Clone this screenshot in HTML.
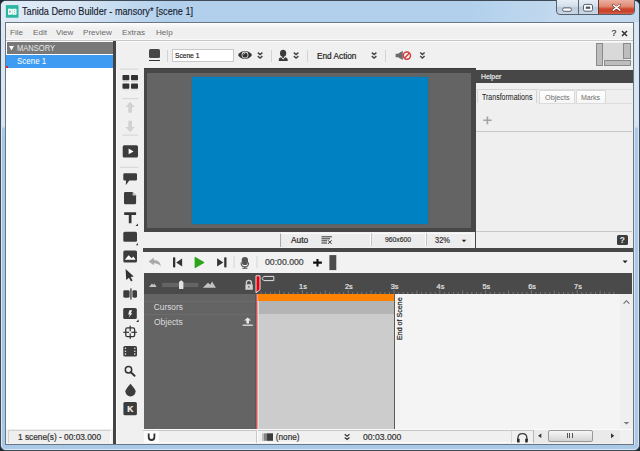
<!DOCTYPE html>
<html><head><meta charset="utf-8">
<style>
*{margin:0;padding:0;box-sizing:border-box}
html,body{width:640px;height:451px;overflow:hidden;background:#1e2630}
body{position:relative;font-family:"Liberation Sans",sans-serif;}
.a{position:absolute}
.t{position:absolute;line-height:1;white-space:nowrap;-webkit-text-stroke:0.2px currentColor}
</style></head><body>
<!-- window frame -->
<div class="a" style="left:0;top:0;width:640px;height:451px;background:linear-gradient(#dce8f4 0,#d8e5f3 125px,#a9c9e6 128px);border:1px solid #3e4a56;border-radius:6px"></div>
<div class="a" style="left:1px;top:1px;width:638px;height:449px;border:1px solid #d7e6f4;border-radius:5px"></div>
<!-- title bar -->
<div class="a" style="left:1px;top:1px;width:638px;height:21px;border-radius:5px 5px 0 0;background:linear-gradient(90deg,#e0ebf6 0,#d9e6f3 70px,#b2d0ec 165px,#b2d0ec 470px,#c2d9ee 555px)"></div>
<svg class="a" style="left:5px;top:4px" width="15" height="15" viewBox="5 4 15 15">
 <rect x="5.9" y="5.1" width="12.6" height="12.6" fill="#29b6a2"/>
 <path d="M8 8.7H11.2Q12.3 8.7 12.3 9.8V13.6Q12.3 14.7 11.2 14.7H8Z" fill="#f4fffc"/>
 <path d="M12.3 8.7H15.8Q16.6 8.7 16.6 9.6V11.2L16.1 11.7L16.6 12.2V13.8Q16.6 14.7 15.8 14.7H12.3Z" fill="#f4fffc"/>
 <rect x="9.4" y="10.5" width="1.1" height="2.2" fill="#5a8f86"/>
 <rect x="14.2" y="9.9" width="0.9" height="0.9" fill="#5a8f86"/>
 <rect x="14.2" y="12.4" width="0.9" height="0.9" fill="#5a8f86"/>
</svg>
<div class="t" style="left:22.3px;top:5.6px;font-size:10.6px;color:#16202e;transform:scaleX(0.862);transform-origin:0 0;-webkit-text-stroke:0.15px #16202e">Tanida Demo Builder - mansory* [scene 1]</div>
<!-- caption buttons -->
<div class="a" style="left:556px;top:-1px;width:79px;height:15.5px;border:1px solid #56606c;border-radius:0 0 4px 4px;background:linear-gradient(#e6eef6,#d3dfeb 45%,#bccbdb 55%,#c9d7e5);overflow:hidden">
  <div class="a" style="left:20.5px;top:0;width:1px;height:16px;background:#5d6874"></div>
  <div class="a" style="left:41px;top:0;width:37px;height:16px;border-left:1px solid #5d3a34;background:linear-gradient(#eab0a2,#e08a74 40%,#cf4a30 55%,#c8402a 70%,#dc7a62)"></div>
</div>
<svg class="a" style="left:556px;top:0" width="80" height="16" viewBox="556 0 80 16">
 <rect x="562.6" y="7.9" width="8.8" height="3.4" rx="1.5" fill="#fdfdfd" stroke="#4a5460" stroke-width="0.9"/>
 <rect x="583.5" y="4.4" width="9" height="6.8" rx="1.6" fill="#fdfdfd" stroke="#4a5460" stroke-width="0.9"/>
 <rect x="585.8" y="6.6" width="4.4" height="2.2" fill="#4a5460"/>
 <path d="M613.3 5.2L619.8 10.2M619.8 5.2L613.3 10.2" stroke="#5a2a22" stroke-width="2.6" stroke-linecap="round"/>
 <path d="M613.3 5.2L619.8 10.2M619.8 5.2L613.3 10.2" stroke="#fff" stroke-width="1.5" stroke-linecap="round"/>
</svg>
<!-- client border -->
<div class="a" style="left:5px;top:22px;width:629px;height:423px;background:#f0f0f0;border:1px solid #6a7684"></div>
<div class="a" style="left:634px;top:22px;width:1px;height:423px;background:#d4e4f3"></div>
<!-- menu bar -->
<div class="a" style="left:6px;top:23px;width:627px;height:18px;background:linear-gradient(#fdfdfd,#f0f0f0 30%)"></div>
<div class="t" style="left:10px;top:29px;font-size:8.1px;color:#6a6a6a;-webkit-text-stroke:0">File</div>
<div class="t" style="left:33px;top:29px;font-size:8.1px;color:#6a6a6a;-webkit-text-stroke:0">Edit</div>
<div class="t" style="left:56px;top:29px;font-size:8.1px;color:#6a6a6a;-webkit-text-stroke:0">View</div>
<div class="t" style="left:83px;top:29px;font-size:8.1px;color:#6a6a6a;-webkit-text-stroke:0">Preview</div>
<div class="t" style="left:122px;top:29px;font-size:8.1px;color:#6a6a6a;-webkit-text-stroke:0">Extras</div>
<div class="t" style="left:156px;top:29px;font-size:8.1px;color:#6a6a6a;-webkit-text-stroke:0">Help</div>
<div class="a" style="left:6px;top:39px;width:627px;height:1px;background:#fafafa"></div>
<div class="a" style="left:6px;top:40px;width:627px;height:1.2px;background:#c6c6c6"></div>


<!-- left scene panel -->
<div class="a" style="left:6px;top:41px;width:107px;height:402px;background:#fff"></div>
<div class="a" style="left:7px;top:42px;width:105.5px;height:12px;background:#787878"></div>
<svg class="a" style="left:9px;top:46px" width="6" height="5"><path d="M0 0H5L2.5 4.5Z" fill="#fff"/></svg>
<div class="t" style="left:17px;top:44.2px;font-size:8.4px;color:#eaeaea;-webkit-text-stroke:0;transform:scaleX(0.9);transform-origin:0 0">MANSORY</div>
<div class="a" style="left:6px;top:55px;width:106.5px;height:12.5px;background:#3d9cf2"></div>
<div class="t" style="left:17.2px;top:57px;font-size:8.4px;color:#fff;-webkit-text-stroke:0;transform:scaleX(0.95);transform-origin:0 0">Scene 1</div>
<div class="a" style="left:6px;top:66px;width:2px;height:2px;background:#d03030"></div>
<!-- left status -->
<div class="a" style="left:6px;top:429px;width:107px;height:14px;background:#f0f0f0"></div>
<div class="a" style="left:8px;top:430px;width:103px;height:13px;background:#efefef;border-top:1px solid #d0d0d0;border-left:1px solid #d0d0d0;border-right:1px solid #fff"></div>
<div class="t" style="left:18px;top:433px;font-size:8.3px;color:#333">1 scene(s) - 00:03.000</div>
<!-- dark divider -->
<div class="a" style="left:113.4px;top:41px;width:2.8px;height:402.5px;background:#444"></div>
<!-- left toolbar -->
<div class="a" style="left:116px;top:41px;width:27px;height:402px;background:#f0f0f0;border-left:1px solid #fafafa"></div>
<!-- top toolbar -->
<div class="a" style="left:116px;top:41.2px;width:517px;height:26.8px;background:#f0f0f0;border-top:1px solid #fbfbfb"></div>
<!-- canvas -->
<div class="a" style="left:143.5px;top:68.4px;width:332.5px;height:163.6px;background:#474747;border-top:1px solid #3a3a3a"></div>
<div class="a" style="left:147.3px;top:72.7px;width:323.9px;height:155.1px;background:#646464"></div>
<div class="a" style="left:192px;top:76.8px;width:236.3px;height:147.4px;background:#0081c2;box-shadow:0 0 1px #0a6da5"></div>
<!-- canvas status -->
<div class="a" style="left:143px;top:232px;width:333px;height:15.5px;background:#f0f0f0"></div>
<!-- helper -->
<div class="a" style="left:475px;top:68px;width:158px;height:180px;background:#efefef;border-left:1px solid #484848"></div>
<div class="a" style="left:476px;top:70px;width:157px;height:12.5px;background:#474747"></div>
<div class="t" style="left:481px;top:73.3px;font-size:8.1px;color:#f0f0f0;transform:scaleX(0.85);transform-origin:0 0">Helper</div>
<!-- dark separator -->
<div class="a" style="left:143px;top:247.5px;width:490px;height:4.5px;background:#474747"></div>
<!-- timeline toolbar -->
<div class="a" style="left:143px;top:252px;width:490px;height:21px;background:#f2f2f2"></div>
<!-- timeline header -->
<div class="a" style="left:144px;top:273px;width:488px;height:21px;background:#4a4a4a"></div>
<!-- timeline left panel -->
<div class="a" style="left:144px;top:294px;width:112px;height:135px;background:#646464"></div>
<div class="a" style="left:144px;top:301px;width:112px;height:1px;background:#6c6c6c"></div>
<div class="a" style="left:144px;top:314px;width:112px;height:1px;background:#6c6c6c"></div>
<div class="t" style="left:153.8px;top:303.4px;font-size:8.3px;transform:scaleX(1.0);transform-origin:0 0;-webkit-text-stroke:0;color:#dcdcdc">Cursors</div>
<div class="t" style="left:154px;top:318.4px;font-size:8.3px;transform:scaleX(1.02);transform-origin:0 0;-webkit-text-stroke:0;color:#dcdcdc">Objects</div>
<!-- timeline content -->
<div class="a" style="left:256px;top:294px;width:364px;height:135px;background:#f4f4f4"></div>
<div class="a" style="left:257px;top:294px;width:137px;height:7px;background:#ff8200"></div>
<div class="a" style="left:257px;top:301px;width:137px;height:13px;background:#b4b4b4"></div>
<div class="a" style="left:257px;top:314px;width:137px;height:115px;background:#cccccc"></div>
<div class="a" style="left:394px;top:294px;width:1px;height:135px;background:#5c5c5c"></div>
<div class="a" style="left:255px;top:294px;width:1px;height:135px;background:#595959"></div>
<div class="a" style="left:256px;top:294px;width:1px;height:135px;background:#c85c5c"></div>
<div class="a" style="left:257px;top:294px;width:1px;height:135px;background:#ec9c9c"></div>
<div class="a" style="left:258px;top:301px;width:1px;height:128px;background:#dedede"></div>
<!-- v scrollbar -->
<div class="a" style="left:620px;top:294px;width:12.5px;height:135px;background:#efefef"></div>
<!-- bottom status -->
<div class="a" style="left:143px;top:429px;width:490px;height:14px;background:#f0f0f0"></div>

<!-- top toolbar icons -->
<div class="a" style="left:148.75px;top:49px;width:11.25px;height:8.75px;background:#474747;border-radius:1.5px"></div>
<div class="a" style="left:148.75px;top:60px;width:11.25px;height:1px;background:#333"></div>
<div class="a" style="left:167px;top:49.5px;width:1px;height:12px;background:#d2d2d2"></div>
<div class="a" style="left:172.25px;top:49.25px;width:61.5px;height:12.25px;background:#fff;border:1px solid #c8c8c8"></div>
<div class="t" style="left:175px;top:52px;font-size:7.8px;color:#222;transform:scaleX(0.85);transform-origin:0 0">Scene 1</div>
<svg class="a" style="left:236px;top:49px" width="30" height="12" viewBox="236 49 30 12">
 <path d="M238 55C241 49.7 249 49.7 252 55C249 60.3 241 60.3 238 55Z" fill="#333"/>
 <circle cx="245" cy="55" r="3.4" fill="#f0f0f0"/>
 <circle cx="245" cy="55" r="2.6" fill="#333"/>
 <path d="M243.6 54.6A1.5 1.5 0 0 1 245.2 53.2" stroke="#f0f0f0" stroke-width="0.7" fill="none"/>
 <path d="M257.8 52.6L260.1 54.6L262.4 52.6M257.8 56.1L260.1 58.1L262.4 56.1" fill="none" stroke="#444" stroke-width="1.4"/>
</svg>
<div class="a" style="left:271px;top:49.5px;width:1px;height:12px;background:#d2d2d2"></div>
<svg class="a" style="left:276px;top:48px" width="26" height="14" viewBox="276 48 26 14">
 <ellipse cx="283.1" cy="53.2" rx="3.1" ry="3.5" fill="#3a3a3a"/>
 <rect x="282.3" y="55.5" width="1.6" height="2.5" fill="#3a3a3a"/>
 <path d="M278.8 61V59.2Q279 57.6 281 57.2L283.1 59.6L285.2 57.2Q287.4 57.6 287.7 59.2V61Z" fill="#3a3a3a"/>
 <path d="M293.8 52.6L296.1 54.6L298.4 52.6M293.8 56.1L296.1 58.1L298.4 56.1" fill="none" stroke="#444" stroke-width="1.4"/>
</svg>
<div class="a" style="left:306.5px;top:49.5px;width:1px;height:12px;background:#d2d2d2"></div>
<div class="t" style="left:317px;top:51.5px;font-size:8.6px;color:#222;transform:scaleX(0.96);transform-origin:0 0">End Action</div>
<svg class="a" style="left:368px;top:50px" width="12" height="11" viewBox="368 50 12 11">
 <path d="M371.8 52.6L374.1 54.6L376.4 52.6M371.8 56.1L374.1 58.1L376.4 56.1" fill="none" stroke="#444" stroke-width="1.4"/>
</svg>
<div class="a" style="left:385px;top:49.5px;width:1px;height:12px;background:#d2d2d2"></div>
<svg class="a" style="left:394px;top:49px" width="34" height="13" viewBox="394 49 34 13">
 <path d="M395.6 53.8H398L402.8 50.7V60L398 57.3H395.6Z" fill="#6b6b6b"/>
 <circle cx="406.9" cy="55.6" r="3.6" fill="#f4f4f4" stroke="#d43c3c" stroke-width="1.5"/>
 <path d="M409.3 53.2L404.5 58" stroke="#d43c3c" stroke-width="1.5"/>
 <path d="M420.2 52.6L422.4 54.6L424.6 52.6M420.2 56.1L422.4 58.1L424.6 56.1" fill="none" stroke="#444" stroke-width="1.4"/>
</svg>
<!-- layout icon -->
<div class="a" style="left:595.5px;top:43px;width:35.5px;height:23.5px;background:#f0f0f0"></div>
<div class="a" style="left:603px;top:43px;width:20.5px;height:17px;background:#d9d9d9"></div>
<div class="a" style="left:595.5px;top:43px;width:7.2px;height:23.3px;background:#bdbdbd;border:1px solid #8a8a8a"></div>
<div class="a" style="left:623.2px;top:43px;width:7.6px;height:15.6px;background:#bdbdbd;border:1px solid #8a8a8a"></div>
<div class="a" style="left:603.8px;top:60.2px;width:27px;height:6.1px;background:#bdbdbd;border:1px solid #8a8a8a"></div>
<!-- menu right -->
<div class="t" style="left:611.4px;top:28.8px;font-size:8.6px;color:#333;-webkit-text-stroke:0.2px #333">?</div>
<svg class="a" style="left:621px;top:29.5px" width="7" height="7"><path d="M1 1L6 6M6 1L1 6" stroke="#333" stroke-width="1.5"/></svg>

<!-- left toolbar icons -->
<svg class="a" style="left:116px;top:41px" width="27" height="402" viewBox="116 41 27 402">
 <g fill="#333">
  <rect x="120" y="68.6" width="18.5" height="1" fill="#d4d4d4"/>
  <rect x="122.5" y="75" width="6.8" height="5.2" rx="0.8"/>
  <rect x="131" y="75" width="7" height="5.2" rx="0.8"/>
  <rect x="122.5" y="83.5" width="6.8" height="5.2" rx="0.8"/>
  <rect x="131" y="83.5" width="7" height="5.2" rx="0.8"/>
  <rect x="122.5" y="81" width="6.8" height="0.8" fill="#d8d8d8"/>
  <rect x="131" y="81" width="7" height="0.8" fill="#d8d8d8"/>
  <rect x="122.5" y="89.5" width="6.8" height="0.8" fill="#d8d8d8"/>
  <rect x="131" y="89.5" width="7" height="0.8" fill="#d8d8d8"/>
  <rect x="122.4" y="98.2" width="15.6" height="1" fill="#d4d4d4"/>
  <path d="M130.1 101.7L134.8 107H132V112.7H128.3V107H125.5Z" fill="#d2d2d2"/>
  <path d="M130.1 132.3L134.8 127H132V120.8H128.3V127H125.5Z" fill="#d2d2d2"/>
  <rect x="122.4" y="134.6" width="15.6" height="1" fill="#d4d4d4"/>
  <rect x="122.7" y="145.3" width="15.3" height="12.2" rx="1.5" fill="#3c3c3c"/>
  <path d="M128.6 148.6L133.6 151.4L128.6 154.2Z" fill="#fff"/>
  <rect x="120" y="166.8" width="18.5" height="1" fill="#d4d4d4"/>
  <path d="M124.5 173.3H135.8Q137 173.3 137 174.5V179.2Q137 180.4 135.8 180.4H129.3L125.8 185.2L126 180.4H124.5Q123.3 180.4 123.3 179.2V174.5Q123.3 173.3 124.5 173.3Z" fill="#3c3c3c"/>
  <path d="M125.2 191.9H132.6L136.1 195.4V203Q136.1 204.3 134.8 204.3H125.2Q124 204.3 124 203V193.1Q124 191.9 125.2 191.9Z" fill="#3c3c3c"/>
  <path d="M132.6 191.9V195.4H136.1Z" fill="#c8c8c8"/>
  <path d="M124.2 212.2H136.1V214.9H131.5V223.2H128.8V214.9H124.2Z" fill="#333"/>
  <path d="M138 223.5V226H135.5Z" fill="#333"/>
  <rect x="123.3" y="231.7" width="13.7" height="10.1" rx="1.5" fill="#3c3c3c"/>
  <path d="M138 243V245.3H135.7Z" fill="#333"/>
  <rect x="123.3" y="250.4" width="13.7" height="12" rx="1.5" fill="#3c3c3c"/>
  <path d="M124.8 259.8L128.6 255.2L131.6 258.2L133.4 256.4L135.6 259.8Z" fill="#fff"/>
  <path d="M125.6 269L133.8 276.6L130.6 277L132.6 280.6L131 281.5L129 277.8L126.2 280Z" fill="#333"/>
  <rect x="123.3" y="290.2" width="6.3" height="7.5" rx="1.4" fill="#3c3c3c"/>
  <rect x="132.4" y="290.2" width="4.6" height="7.5" rx="1.4" fill="#3c3c3c"/>
  <rect x="130.4" y="288.4" width="1.1" height="11.1" fill="#1a1a1a"/>
  <rect x="123.2" y="308" width="13.6" height="11" rx="1.5" fill="#3c3c3c"/>
  <path d="M129.4 310.3H132.2L130.7 313.3H132.4L128.5 317.7L129.9 314.6H128.2Z" fill="#f4f4f4"/>
  <path d="M138.6 319.6V321.9H136.1Z" fill="#222"/>
  <rect x="125.75" y="327.95" width="8.9" height="8.7" rx="1.6" fill="none" stroke="#333" stroke-width="1.3"/>
  <rect x="129.6" y="325.6" width="1.2" height="5.6"/><rect x="129.6" y="333.4" width="1.2" height="5.5"/>
  <rect x="123.3" y="331.7" width="5.8" height="1.2"/><rect x="131.3" y="331.7" width="5.6" height="1.2"/>
  <rect x="123.3" y="345.9" width="13.7" height="10.6" rx="1.5" fill="#3c3c3c"/>
  <g fill="#e8e8e8"><circle cx="125.5" cy="348.3" r="0.8"/><circle cx="125.5" cy="351.2" r="0.8"/><circle cx="125.5" cy="354.1" r="0.8"/><circle cx="134.8" cy="348.3" r="0.8"/><circle cx="134.8" cy="351.2" r="0.8"/><circle cx="134.8" cy="354.1" r="0.8"/></g>
  <circle cx="128.5" cy="369.7" r="3.2" fill="none" stroke="#333" stroke-width="1.5"/>
  <path d="M130.8 372.2L134.6 375.8" stroke="#333" stroke-width="1.9" stroke-linecap="round"/>
  <path d="M130.4 383.8Q135.6 389.5 135.6 391.3A5.1 5.1 0 0 1 125.4 391.3Q125.4 389.5 130.4 383.8Z" fill="#3c3c3c"/>
  <rect x="123.4" y="402.1" width="13.5" height="13.1" rx="1.5" fill="#3c3c3c"/>
 </g>
</svg>
<div class="t" style="left:127.2px;top:405px;font-size:8.5px;font-weight:bold;color:#f2f2f2">K</div>

<!-- canvas status boxes -->
<div class="a" style="left:280px;top:232.5px;width:191px;height:14px;background:#ececec;border-left:1px solid #a8a8a8;border-top:1px solid #fafafa"></div>
<div class="a" style="left:369.5px;top:233px;width:1px;height:13px;background:#fdfdfd"></div>
<div class="a" style="left:370.5px;top:233px;width:1px;height:13px;background:#c4c4c4"></div>
<div class="a" style="left:425px;top:233px;width:1px;height:13px;background:#fdfdfd"></div>
<div class="a" style="left:426px;top:233px;width:1px;height:13px;background:#c4c4c4"></div>
<div class="t" style="left:291px;top:235.8px;font-size:8.3px;color:#222">Auto</div>
<svg class="a" style="left:320px;top:235px" width="14" height="10" viewBox="320 235 14 10">
 <g fill="#333"><rect x="321.5" y="236.3" width="10.4" height="1"/><rect x="321.5" y="238.3" width="8.5" height="1"/><rect x="321.5" y="240.3" width="5.5" height="1"/><rect x="321.5" y="242.5" width="5.5" height="1"/></g>
 <path d="M328 240.3L331.6 243.9M331.6 240.3L328 243.9" stroke="#333" stroke-width="1"/>
</svg>
<div class="t" style="left:384.7px;top:235.8px;font-size:7.4px;color:#333;transform:scaleX(0.92);transform-origin:0 0">960x600</div>
<div class="t" style="left:434.7px;top:235.8px;font-size:8.3px;color:#333;transform:scaleX(0.9);transform-origin:0 0">32%</div>
<svg class="a" style="left:461px;top:239px" width="6" height="4"><path d="M0.8 0.8H5.2L3 3.2Z" fill="#222"/></svg>
<!-- helper tabs -->
<div class="a" style="left:476px;top:88.5px;width:156px;height:1px;background:#dcdcdc"></div>
<div class="a" style="left:476.8px;top:89px;width:60.5px;height:14px;background:#f0f0f0;border:1px solid #d4d4d4;border-bottom:none;border-radius:2px 2px 0 0"></div>
<div class="a" style="left:538.5px;top:89.6px;width:36px;height:13px;background:linear-gradient(#fff,#f6f6f6);border:1px solid #d8d8d8;border-bottom:none;border-radius:2px 2px 0 0"></div>
<div class="a" style="left:575.5px;top:89.6px;width:30.5px;height:13px;background:linear-gradient(#fff,#f6f6f6);border:1px solid #d8d8d8;border-bottom:none;border-radius:2px 2px 0 0"></div>
<div class="a" style="left:537.5px;top:102.5px;width:94.5px;height:1px;background:#dcdcdc"></div>
<div class="t" style="left:481.6px;top:92.6px;font-size:8.3px;color:#1e1e1e;-webkit-text-stroke:0.05px #1e1e1e;transform:scaleX(0.845);transform-origin:0 0">Transformations</div>
<div class="t" style="left:544.6px;top:93.6px;font-size:7.8px;color:#6e6e6e;-webkit-text-stroke:0;transform:scaleX(0.93);transform-origin:0 0">Objects</div>
<div class="t" style="left:581.4px;top:93.6px;font-size:7.8px;color:#6e6e6e;-webkit-text-stroke:0;transform:scaleX(0.9);transform-origin:0 0">Marks</div>
<svg class="a" style="left:482px;top:115px" width="11" height="11" viewBox="482 115 11 11"><path d="M487.45 116.4V124.2M483.3 120.3H491.6" stroke="#a2a2a2" stroke-width="1.6"/></svg>
<div class="a" style="left:476px;top:131px;width:156px;height:1px;background:#c8c8c8"></div>
<div class="a" style="left:476px;top:231px;width:156px;height:1px;background:#c8c8c8"></div>
<div class="a" style="left:616.6px;top:234.6px;width:11.3px;height:10.2px;background:#3c3c3c;border-radius:1.5px"></div>
<div class="t" style="left:619.8px;top:236px;font-size:8.4px;font-weight:bold;color:#e8e8e8;-webkit-text-stroke:0">?</div>

<!-- timeline toolbar icons -->
<svg class="a" style="left:143px;top:252px" width="200" height="21" viewBox="143 252 200 21">
 <path d="M148.7 261.4L153.8 257.6V260Q160.6 260.4 160.8 266.4Q158.8 263.4 153.8 263.2V265.2Z" fill="#a9a9a9"/>
 <rect x="173" y="257.3" width="2.3" height="10.3" rx="0.8" fill="#333"/>
 <path d="M182.1 258.4V266.6L176.2 262.5Z" fill="#333"/>
 <path d="M194.6 257.4V267.6Q194.6 268.4 195.4 268L204 263.1Q204.6 262.5 204 262L195.4 257Q194.6 256.6 194.6 257.4Z" fill="#2ba41c"/>
 <path d="M217.1 258.3V266.6L223.3 262.5Z" fill="#333"/>
 <rect x="224.2" y="257.2" width="2.3" height="10.4" rx="0.8" fill="#333"/>
 <rect x="233.6" y="256" width="1" height="12" fill="#d6d6d6"/>
 <rect x="241.7" y="257" width="6.3" height="8" rx="3.1" fill="#555"/>
 <path d="M241.1 262.4Q241.1 266.9 244.85 266.9Q248.6 266.9 248.6 262.4" fill="none" stroke="#555" stroke-width="1.1"/>
 <rect x="244.3" y="266.6" width="1.1" height="1.6" fill="#555"/>
 <rect x="242.3" y="267.8" width="5.1" height="1" fill="#555"/>
 <rect x="256.5" y="256" width="1" height="12" fill="#d6d6d6"/>
 <path d="M317.5 258.9V266.4M313.1 262.65H321.9" stroke="#111" stroke-width="2.1"/>
 <rect x="329.4" y="255.1" width="6.9" height="15" fill="#4c4c4c"/>
</svg>
<div class="t" style="left:265px;top:258px;font-size:8.7px;color:#3c3c3c">00:00.000</div>
<svg class="a" style="left:620px;top:259px" width="10" height="6"><path d="M2.6 1.6H7.6L5.1 4.3Z" fill="#222"/></svg>
<!-- header left slider -->
<svg class="a" style="left:143px;top:273px" width="115" height="22" viewBox="143 273 115 22">
 <path d="M149 287.1L152 283.6L153.3 285L154.4 283.4L156.6 287.1Z" fill="#c4c4c4"/>
 <rect x="162.1" y="282.8" width="36.3" height="4.3" fill="#646464"/>
 <path d="M179 282L181.2 280.2L183.4 282V288.4Q183.4 289 182.8 289H179.6Q179 289 179 288.4Z" fill="#e2e2e2"/>
 <path d="M202.8 287.8L208 282.8L210.3 284.8L212 281.5L215.9 287.8Z" fill="#c4c4c4"/>
 <path d="M246.4 284.3V282.6Q246.4 280.4 248.9 280.4Q251.4 280.4 251.4 282.6V284.3" fill="none" stroke="#d2d2d2" stroke-width="1.3"/>
 <rect x="245.4" y="284.2" width="7.4" height="5.6" rx="0.6" fill="#d2d2d2"/>
 <rect x="248.3" y="286" width="1.1" height="1.6" fill="#4a4a4a"/>
</svg>
<!-- playhead marker -->
<svg class="a" style="left:254px;top:274px" width="22" height="20" viewBox="254 274 22 20">
 <path d="M256 275.8H260V289.6L256 292.8Z" fill="#e00010" stroke="#f4f4f4" stroke-width="0.9"/>
 <path d="M264 276.4H273.8V280.6H264L261.8 278.5Z" fill="#4a4a4a" stroke="#f0f0f0" stroke-width="0.9"/>
</svg>

<!-- ruler -->
<svg class="a" style="left:257px;top:273px" width="363" height="22" viewBox="257 273 363 22"><g fill="#767676"><rect x="260.68" y="292" width="1" height="2"/><rect x="265.26" y="292" width="1" height="2"/><rect x="269.84" y="292" width="1" height="2"/><rect x="274.42" y="292" width="1" height="2"/><rect x="279.00" y="290.5" width="1" height="3.5"/><rect x="283.58" y="292" width="1" height="2"/><rect x="288.16" y="292" width="1" height="2"/><rect x="292.74" y="292" width="1" height="2"/><rect x="297.32" y="292" width="1" height="2"/><rect x="301.90" y="290" width="1" height="4"/><rect x="306.48" y="292" width="1" height="2"/><rect x="311.06" y="292" width="1" height="2"/><rect x="315.64" y="292" width="1" height="2"/><rect x="320.22" y="292" width="1" height="2"/><rect x="324.80" y="290.5" width="1" height="3.5"/><rect x="329.38" y="292" width="1" height="2"/><rect x="333.96" y="292" width="1" height="2"/><rect x="338.54" y="292" width="1" height="2"/><rect x="343.12" y="292" width="1" height="2"/><rect x="347.70" y="290" width="1" height="4"/><rect x="352.28" y="292" width="1" height="2"/><rect x="356.86" y="292" width="1" height="2"/><rect x="361.44" y="292" width="1" height="2"/><rect x="366.02" y="292" width="1" height="2"/><rect x="370.60" y="290.5" width="1" height="3.5"/><rect x="375.18" y="292" width="1" height="2"/><rect x="379.76" y="292" width="1" height="2"/><rect x="384.34" y="292" width="1" height="2"/><rect x="388.92" y="292" width="1" height="2"/><rect x="393.50" y="290" width="1" height="4"/><rect x="398.08" y="292" width="1" height="2"/><rect x="402.66" y="292" width="1" height="2"/><rect x="407.24" y="292" width="1" height="2"/><rect x="411.82" y="292" width="1" height="2"/><rect x="416.40" y="290.5" width="1" height="3.5"/><rect x="420.98" y="292" width="1" height="2"/><rect x="425.56" y="292" width="1" height="2"/><rect x="430.14" y="292" width="1" height="2"/><rect x="434.72" y="292" width="1" height="2"/><rect x="439.30" y="290" width="1" height="4"/><rect x="443.88" y="292" width="1" height="2"/><rect x="448.46" y="292" width="1" height="2"/><rect x="453.04" y="292" width="1" height="2"/><rect x="457.62" y="292" width="1" height="2"/><rect x="462.20" y="290.5" width="1" height="3.5"/><rect x="466.78" y="292" width="1" height="2"/><rect x="471.36" y="292" width="1" height="2"/><rect x="475.94" y="292" width="1" height="2"/><rect x="480.52" y="292" width="1" height="2"/><rect x="485.10" y="290" width="1" height="4"/><rect x="489.68" y="292" width="1" height="2"/><rect x="494.26" y="292" width="1" height="2"/><rect x="498.84" y="292" width="1" height="2"/><rect x="503.42" y="292" width="1" height="2"/><rect x="508.00" y="290.5" width="1" height="3.5"/><rect x="512.58" y="292" width="1" height="2"/><rect x="517.16" y="292" width="1" height="2"/><rect x="521.74" y="292" width="1" height="2"/><rect x="526.32" y="292" width="1" height="2"/><rect x="530.90" y="290" width="1" height="4"/><rect x="535.48" y="292" width="1" height="2"/><rect x="540.06" y="292" width="1" height="2"/><rect x="544.64" y="292" width="1" height="2"/><rect x="549.22" y="292" width="1" height="2"/><rect x="553.80" y="290.5" width="1" height="3.5"/><rect x="558.38" y="292" width="1" height="2"/><rect x="562.96" y="292" width="1" height="2"/><rect x="567.54" y="292" width="1" height="2"/><rect x="572.12" y="292" width="1" height="2"/><rect x="576.70" y="290" width="1" height="4"/><rect x="581.28" y="292" width="1" height="2"/><rect x="585.86" y="292" width="1" height="2"/><rect x="590.44" y="292" width="1" height="2"/><rect x="595.02" y="292" width="1" height="2"/><rect x="599.60" y="290.5" width="1" height="3.5"/><rect x="604.18" y="292" width="1" height="2"/><rect x="608.76" y="292" width="1" height="2"/><rect x="613.34" y="292" width="1" height="2"/></g></svg>
<div class="t" style="left:299.1px;top:283px;font-size:7.3px;color:#e8e8e8">1s</div>
<div class="t" style="left:344.9px;top:283px;font-size:7.3px;color:#e8e8e8">2s</div>
<div class="t" style="left:390.8px;top:283px;font-size:7.3px;color:#e8e8e8">3s</div>
<div class="t" style="left:436.6px;top:283px;font-size:7.3px;color:#e8e8e8">4s</div>
<div class="t" style="left:482.5px;top:283px;font-size:7.3px;color:#e8e8e8">5s</div>
<div class="t" style="left:528.3px;top:283px;font-size:7.3px;color:#e8e8e8">6s</div>
<div class="t" style="left:574.1px;top:283px;font-size:7.3px;color:#e8e8e8">7s</div>

<div class="t" style="left:396.5px;top:340px;font-size:7.1px;color:#222;transform:rotate(-90deg);transform-origin:0 0">End of Scene</div>
<!-- timeline left row icon -->
<svg class="a" style="left:241px;top:316px" width="14" height="12" viewBox="241 316 14 12">
 <path d="M247.7 317.4L251.2 320.6H249V323.4H246.4V320.6H244.2Z" fill="#eaeaea"/>
 <rect x="242.6" y="324.6" width="10.2" height="1.2" fill="#eaeaea"/>
</svg>

<!-- bottom status bar -->
<div class="a" style="left:143px;top:429.3px;width:490px;height:1px;background:#fafafa"></div>
<div class="a" style="left:143px;top:430.3px;width:490px;height:0.9px;background:#c6c6c6"></div>
<div class="a" style="left:143px;top:442.4px;width:490px;height:1px;background:#fbfbfb"></div>
<div class="a" style="left:144px;top:431.2px;width:14.8px;height:11.2px;background:#fdfdfd"></div>
<svg class="a" style="left:146px;top:432px" width="11" height="10" viewBox="146 432 11 10"><path d="M148.7 433.4V437Q148.7 440 151.55 440Q154.4 440 154.4 437V433.4" fill="none" stroke="#333" stroke-width="1.8"/></svg>
<div class="a" style="left:256px;top:430px;width:1px;height:13px;background:#c8c8c8"></div>
<div class="a" style="left:257px;top:430px;width:1px;height:13px;background:#fdfdfd"></div>
<svg class="a" style="left:261px;top:432px" width="14" height="10" viewBox="261 432 14 10">
 <rect x="262.5" y="433.3" width="1" height="7.5" fill="#888"/>
 <rect x="264.3" y="433.3" width="1.4" height="7.5" fill="#555"/>
 <rect x="266.4" y="433.3" width="6.6" height="7.5" fill="#3c3c3c"/>
</svg>
<div class="t" style="left:275.8px;top:433.5px;font-size:8.2px;color:#333">(none)</div>
<svg class="a" style="left:342px;top:432px" width="10" height="10" viewBox="342 432 10 10">
 <path d="M344.7 434.3L347.1 436.2L349.5 434.3M344.7 437.4L347.1 439.3L349.5 437.4" fill="none" stroke="#3a3a3a" stroke-width="1.3"/>
</svg>
<div class="t" style="left:363px;top:433px;font-size:8.6px;color:#333">00:03.000</div>
<div class="a" style="left:511px;top:431px;width:1px;height:12px;background:#d8d8d8"></div>
<svg class="a" style="left:515px;top:431px" width="15" height="13" viewBox="515 431 15 13">
 <path d="M517.9 440.4V438.4Q517.9 433.6 522.4 433.6Q526.9 433.6 526.9 438.4V440.4" fill="none" stroke="#3a3a3a" stroke-width="1.3"/>
 <path d="M517 438.8H519.6V442.6H518.2Q517 442.6 517 441.4Z" fill="#2a2a2a"/>
 <path d="M525.2 438.8H527.8V441.4Q527.8 442.6 526.6 442.6H525.2Z" fill="#2a2a2a"/>
</svg>
<div class="a" style="left:533px;top:430px;width:1px;height:13px;background:#b8b8b8"></div>
<!-- h scrollbar -->
<div class="a" style="left:534px;top:429.5px;width:86px;height:13.5px;background:#eaeaea"></div>
<svg class="a" style="left:536px;top:432px" width="8" height="8" viewBox="536 432 8 8"><path d="M541.3 433.4V438L538.1 435.7Z" fill="#333"/></svg>
<div class="a" style="left:548px;top:430.1px;width:45px;height:12.2px;background:linear-gradient(#f6f6f6,#e6e6e6 50%,#d4d4d4);border:1px solid #999;border-radius:2px"></div>
<div class="a" style="left:567px;top:433.4px;width:1.1px;height:4.2px;background:#555"></div>
<div class="a" style="left:569.4px;top:433.4px;width:1.1px;height:4.2px;background:#555"></div>
<div class="a" style="left:571.8px;top:433.4px;width:1.1px;height:4.2px;background:#555"></div>
<svg class="a" style="left:609px;top:432px" width="8" height="8" viewBox="609 432 8 8"><path d="M611 433.2V438.2L614.2 435.7Z" fill="#333"/></svg>
<div class="a" style="left:620px;top:429.5px;width:12.5px;height:13.5px;background:#f0f0f0"></div>
<!-- v scrollbar arrows -->
<svg class="a" style="left:621px;top:298px" width="10" height="8" viewBox="621 298 10 8"><path d="M623.6 303.6L626.45 300.7L629.3 303.6" fill="none" stroke="#6a6a6a" stroke-width="1.1"/></svg>
<svg class="a" style="left:621px;top:419px" width="10" height="8" viewBox="621 419 10 8"><path d="M623.6 421.9L626.45 424.6L629.3 421.9Z" fill="#7a7a7a"/></svg>
</body></html>
